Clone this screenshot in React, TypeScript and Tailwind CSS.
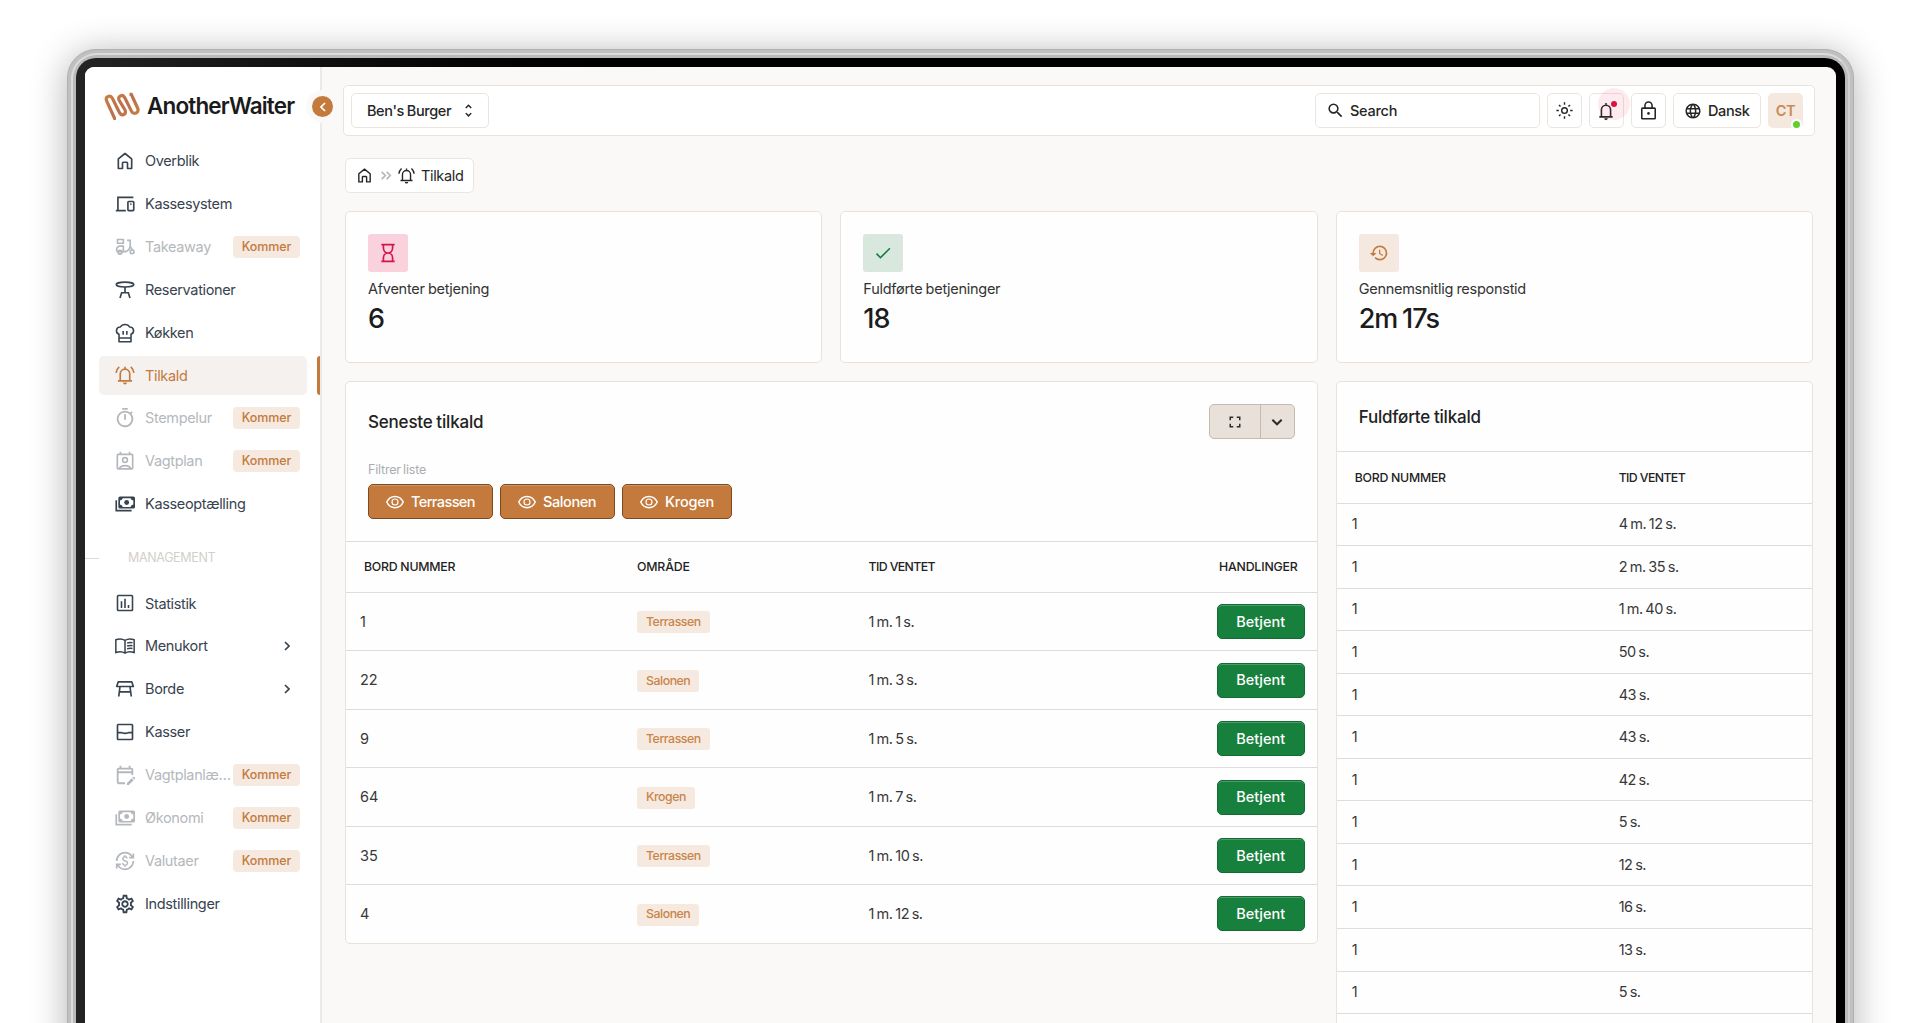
import type { ReactNode } from "react";
import {
  MdCheck,
  MdCurrencyExchange,
  MdHistory,
  MdLanguage,
  MdOutlineEditCalendar,
  MdOutlineSettings,
  MdOutlineTimer,
  MdSearch,
  MdUnfoldMore,
} from "react-icons/md";

type IconProps = { className?: string };

function Stroke({ className, children, width = 1.8 }: { className?: string; children: ReactNode; width?: number }) {
  return (
    <svg viewBox="0 0 24 24" className={className} fill="none" stroke="currentColor" strokeWidth={width}>
      {children}
    </svg>
  );
}

const Home = ({ className }: IconProps) => (
  <Stroke className={className} width={2}>
    <path d="M4 21V9.500L12 3l8 6.500V21h-5v-6.500a1 1 0 0 0-1-1h-4a1 1 0 0 0-1 1V21z" strokeLinejoin="round" />
  </Stroke>
);

const Devices = ({ className }: IconProps) => (
  <Stroke className={className} width={2}>
    <path d="M22 4H3.500V19M1 20h12" />
    <rect x="15.500" y="9" width="7" height="11" rx="1" />
    <path d="M19 11.500v1.500" />
  </Stroke>
);

const BellRing = ({ className }: IconProps) => (
  <Stroke className={className} width={2}>
    <path d="M3.500 19h17M6.300 19v-8.300a5.700 5.700 0 0 1 11.400 0V19M12 5V2.200M1.300 9.500C1.500 6.500 2.800 4.300 5 2.200M22.700 9.500c-.2-3-1.500-5.200-3.700-7.300" />
    <path d="M9.600 21h4.800a2.400 2.400 0 0 1-4.800 0z" fill="currentColor" stroke="none" />
  </Stroke>
);

const Bell = ({ className }: IconProps) => (
  <Stroke className={className} width={1.9}>
    <path d="M4 19h16M6.500 19v-8.500a5.500 5.500 0 0 1 11 0V19M12 5V2.500" />
    <path d="M9.800 20.800h4.400a2.200 2.200 0 0 1-4.400 0z" fill="currentColor" stroke="none" />
  </Stroke>
);

const Moped = ({ className }: IconProps) => (
  <Stroke className={className} width={2}>
    <path d="M3 3h7v4.500H3zM2 17.500V15a4 4 0 0 1 4-4h4v6.500h3.500c2.200-1.200 4.300-3.500 4.800-6V4H14.500" />
    <path d="M2 17.500h8M18 11l2.500 4" />
    <circle cx="6" cy="18.200" r="2.300" />
    <circle cx="20.500" cy="17.800" r="2.300" />
  </Stroke>
);

const TableBar = ({ className }: IconProps) => (
  <Stroke className={className} width={2}>
    <ellipse cx="12" cy="5.500" rx="10.500" ry="2.900" />
    <path d="M12 8.400V15M6 21.500l2-6.200h8l2 6.200" />
  </Stroke>
);

const ChefHat = ({ className }: IconProps) => (
  <Stroke className={className} width={1.9}>
    <path d="M4.800 22.500V13.500C.2 12 .8 4.800 6.500 4.800 8.500.8 15.500.8 17.500 4.800c5.700 0 6.300 7.200 1.700 8.700v9zM4.800 18h14.400M9.800 9.500v4.500M14.200 9.500v4.500" strokeLinejoin="round" />
  </Stroke>
);

const Timer = () => <MdOutlineTimer className="-mx-px size-[22px] shrink-0" />;
const EditCalendar = () => <MdOutlineEditCalendar className="-mx-px size-[22px] shrink-0" />;
const Exchange = () => <MdCurrencyExchange className="size-5 shrink-0" />;
const Settings = () => <MdOutlineSettings className="-mx-px size-[22px] shrink-0" />;

const ContactCalendar = ({ className }: IconProps) => (
  <Stroke className={className} width={2}>
    <rect x="2.800" y="4" width="18.400" height="17.500" rx="1" />
    <path d="M6.500 1V4M17.500 1V4M5 21c3-4.500 11-4.500 14 0" />
    <circle cx="12" cy="10.800" r="2.900" />
  </Stroke>
);

const Payments = ({ className }: IconProps) => (
  <Stroke className={className} width={2}>
    <rect x="5" y="4" width="18" height="12.500" rx="1" />
    <path d="M1.500 7.500V20H20" />
    <circle cx="14" cy="10.200" r="2.900" fill="currentColor" stroke="none" />
    <path d="M5 8V4h4.500A4.500 4.500 0 0 1 5 8zM23 8V4h-4.500A4.500 4.500 0 0 0 23 8zM5 12.500v4h4.500A4.500 4.500 0 0 0 5 12.500zM23 12.500v4h-4.500a4.500 4.500 0 0 1 4.500-4z" fill="currentColor" stroke="none" />
  </Stroke>
);

const BarsBox = ({ className }: IconProps) => (
  <Stroke className={className} width={1.9}>
    <rect x="3" y="3" width="18" height="18" rx="1" />
    <path d="M7.800 10v8M12 7v11M16.200 14.500V18" />
  </Stroke>
);

const MenuBook = ({ className }: IconProps) => (
  <Stroke className={className} width={1.8}>
    <path d="M12 20.500C9 18.500 5 18.300 1 19.800V4.500C5 3 9 3.300 12 5.300c3-2 7-2.300 11-.8v15.300C19 18.300 15 18.500 12 20.500zM12 5.300v15.200" />
    <path d="M14.500 8.500c2-.8 4.500-.9 6.500-.4M14.500 12c2-.8 4.500-.9 6.500-.4M14.500 15.500c2-.8 4.500-.9 6.500-.4" />
  </Stroke>
);

const Table = ({ className }: IconProps) => (
  <Stroke className={className} width={2}>
    <path d="M3.800 3.500h16.400l1.800 5.500H2zM6 9L4.500 21M18 9l1.500 12M5.500 15.500h13" strokeLinejoin="round" />
  </Stroke>
);

const Drawer = ({ className }: IconProps) => (
  <Stroke className={className} width={2}>
    <rect x="3" y="3" width="18" height="18" rx="1" />
    <path d="M3 12.800h4.500c1.500 1 7.500 1 9 0H21" />
  </Stroke>
);

const Hourglass = ({ className }: IconProps) => (
  <Stroke className={className} width={2}>
    <path d="M4 2h16M4 22h16M6.500 2v4c0 3.500 2.500 6 5.500 6s5.500-2.500 5.500-6V2M6.500 22v-4c0-3.500 2.500-6 5.500-6s5.500 2.500 5.500 6v4" />
  </Stroke>
);

const Sun = ({ className }: IconProps) => (
  <Stroke className={className} width={2}>
    <circle cx="12" cy="12" r="4" />
    <path d="M12 .5v3.500M12 20v3.500M.5 12H4M20 12h3.500M4.200 4.200l2.200 2.200M17.600 17.600l2.200 2.200M4.200 19.800l2.200-2.200M17.600 6.400l2.200-2.200" />
  </Stroke>
);

const Lock = ({ className }: IconProps) => (
  <Stroke className={className} width={2}>
    <rect x="3.500" y="9" width="17" height="13.500" rx="1" />
    <path d="M7.500 9V5.800a4.500 4.500 0 0 1 9 0V9" />
    <circle cx="12" cy="15.700" r="1.700" fill="currentColor" stroke="none" />
  </Stroke>
);

const Eye = ({ className }: IconProps) => (
  <Stroke className={className} width={2}>
    <path d="M1 12C5.500 2 18.500 2 23 12 18.500 22 5.500 22 1 12z" />
    <circle cx="12" cy="12" r="4" strokeWidth="1.600" />
  </Stroke>
);

const Expand = ({ className }: IconProps) => (
  <Stroke className={className} width={3}>
    <path d="M2.500 8.500V2.500h6M15.500 2.500h6v6M21.500 15.500v6h-6M8.500 21.500h-6v-6" />
  </Stroke>
);

const Chevron = ({ className }: IconProps) => (
  <Stroke className={className} width={3.500}>
    <path d="M8 4l8 8-8 8" />
  </Stroke>
);

const Logo = () => (
  <svg viewBox="0 0 36 28" className="h-7 w-9 shrink-0" fill="none">
    <defs>
      <linearGradient id="mark" x1="0" y1="0" x2="1" y2="1">
        <stop offset="0" stopColor="#c9803f" />
        <stop offset="0.5" stopColor="#bd6f4e" />
        <stop offset="1" stopColor="#c9803f" />
      </linearGradient>
    </defs>
    <path
      d="M12 26.300 H10.600 L2.600 9 C1 4.300 6.300 2.300 8.500 6.500 L15.400 20.500 C17.600 24.800 22.800 22.500 21 18 L15.300 8.500 C13.200 4 18.500 1.500 20.800 5.800 L27.300 18.800 C29.300 23.500 35.800 21 33.600 16 L27.300 2.300 H25.500"
      stroke="url(#mark)"
      strokeWidth="3.200"
    />
  </svg>
);

type NavItem = {
  label: string;
  icon: (p: IconProps) => ReactNode;
  soon?: boolean;
  active?: boolean;
  more?: boolean;
};

const mainNav: NavItem[] = [
  { label: "Overblik", icon: Home },
  { label: "Kassesystem", icon: Devices },
  { label: "Takeaway", icon: Moped, soon: true },
  { label: "Reservationer", icon: TableBar },
  { label: "Køkken", icon: ChefHat },
  { label: "Tilkald", icon: BellRing, active: true },
  { label: "Stempelur", icon: Timer, soon: true },
  { label: "Vagtplan", icon: ContactCalendar, soon: true },
  { label: "Kasseoptælling", icon: Payments },
];

const managementNav: NavItem[] = [
  { label: "Statistik", icon: BarsBox },
  { label: "Menukort", icon: MenuBook, more: true },
  { label: "Borde", icon: Table, more: true },
  { label: "Kasser", icon: Drawer },
  { label: "Vagtplanlæ…", icon: EditCalendar, soon: true },
  { label: "Økonomi", icon: Payments, soon: true },
  { label: "Valutaer", icon: Exchange, soon: true },
  { label: "Indstillinger", icon: Settings },
];

function NavRow({ item }: { item: NavItem }) {
  const Icon = item.icon;
  const tone = item.active ? "text-[#c47a3c]" : item.soon ? "text-[#b4b8bc]" : "text-[#37434f]";
  return (
    <li className="relative flex h-[42.900px] items-center pl-[14px] pr-[13px]">
      <div className={`flex h-[39px] w-full items-center rounded-[5px] pl-4 pr-[7px] ${tone} ${item.active ? "bg-[#f5f1ef]" : ""}`}>
        <Icon className="size-5 shrink-0" />
        <span className="ml-[10px] flex-1 whitespace-nowrap text-[14.500px] tracking-[-0.350px]">{item.label}</span>
        {item.soon && (
          <span className="flex h-[22px] w-[67px] shrink-0 items-center justify-center rounded bg-[#f5e9e0] pt-px text-[12.500px] font-medium tracking-[-0.100px] text-[#c47a3c]">
            Kommer
          </span>
        )}
        {item.more && <Chevron className="mr-[7px] size-3" />}
      </div>
      {item.active && <span className="absolute right-0 h-[39px] w-[3px] rounded-l-[3px] bg-[#c47a3c]" />}
    </li>
  );
}

function Sidebar() {
  return (
    <aside className="relative flex w-[237px] shrink-0 flex-col border-r-2 border-[#ece9e6] bg-white">
      <div className="flex h-[72.500px] items-center pl-[19px] pt-[6px]">
        <Logo />
        <span className="ml-[7px] text-[22.500px] font-semibold tracking-[-0.850px] text-[#1b1b1b]">AnotherWaiter</span>
      </div>
      <ul>
        {mainNav.map((item) => (
          <NavRow key={item.label} item={item} />
        ))}
      </ul>
      <div className="flex h-[56.500px] items-center pt-[9px]">
        <span className="h-px w-[14px] bg-[#dedbd6]" />
        <span className="ml-[29px] text-[12.500px] tracking-[-0.350px] text-[#d3d0c8]">MANAGEMENT</span>
      </div>
      <ul>
        {managementNav.map((item) => (
          <NavRow key={item.label} item={item} />
        ))}
      </ul>
      <button className="absolute -right-[19px] top-[23px] flex size-[33px] items-center justify-center rounded-full bg-[#faf9f7]">
        <span className="flex size-[21px] items-center justify-center rounded-full bg-[#c47a3c] text-white">
          <Chevron className="size-3 rotate-180" />
        </span>
      </button>
    </aside>
  );
}

const box = "flex h-[35px] items-center rounded-[5px] border border-[#ebe5df] bg-white text-[#262626]";

function Header() {
  return (
    <header className="flex h-[51px] items-center rounded-[5px] border border-[#e8e3dc] bg-white pl-[7px] pr-[11px]">
      <div className={`${box} w-[138px] pl-[15px] text-[14.500px] font-medium tracking-[-0.400px] [word-spacing:-0.600px]`}>
        Ben's Burger
        <MdUnfoldMore className="ml-auto mr-[11px] size-[17px]" />
      </div>
      <div className="ml-auto flex gap-[7px]">
        <div className={`${box} w-[225px] pl-[10px] text-[14.500px] font-medium tracking-[-0.250px]`}>
          <MdSearch className="mr-[5px] size-[19px]" />
          Search
        </div>
        <div className={`${box} w-[35px] justify-center`}>
          <Sun className="size-[17px]" />
        </div>
        <div className={`${box} relative w-[35px] justify-center`}>
          <Bell className="-ml-px size-[20px]" />
          <span className="absolute right-[-7px] top-[-6px] size-8 rounded-full bg-[#f43f5e]/10" />
          <span className="absolute right-[6px] top-[7px] size-[6px] rounded-full bg-[#dc1040]" />
        </div>
        <div className={`${box} w-[35px] justify-center`}>
          <Lock className="size-[19px]" />
        </div>
        <div className={`${box} w-[88px] pl-[10px] text-[14.500px] font-medium tracking-[-0.400px]`}>
          <MdLanguage className="mr-[6px] size-[18px]" />
          Dansk
        </div>
        <div className="relative flex size-[35px] items-center justify-center rounded-[5px] bg-[#f5e8df] text-[14.500px] font-semibold tracking-[-0.300px] text-[#c98a52]">
          CT
          <span className="absolute -bottom-[2px] right-px size-[11px] rounded-full border-2 border-white bg-[#63cf2b]" />
        </div>
      </div>
    </header>
  );
}

function Stat({ icon, tone, label, value }: { icon: ReactNode; tone: string; label: string; value: string }) {
  return (
    <div className="h-[152px] rounded-[5px] border border-[#e9e2da] bg-[#fefefe] pl-[22px] pt-[22px]">
      <div className={`flex h-[38px] w-10 items-center justify-center rounded-[3px] ${tone}`}>{icon}</div>
      <div className="mt-[6px] text-[14.500px] leading-[21px] tracking-[-0.270px] text-[#333] [word-spacing:-0.500px]">{label}</div>
      <div className="mt-[2px] text-[27px] font-medium leading-[36px] tracking-[-1px] text-[#1c1c1c] [word-spacing:-1.500px]">{value}</div>
    </div>
  );
}

const calls = [
  ["1", "Terrassen", "1 m. 1 s."],
  ["22", "Salonen", "1 m. 3 s."],
  ["9", "Terrassen", "1 m. 5 s."],
  ["64", "Krogen", "1 m. 7 s."],
  ["35", "Terrassen", "1 m. 10 s."],
  ["4", "Salonen", "1 m. 12 s."],
];

const filters = [
  { label: "Terrassen", size: "w-[125px]", tracking: "tracking-[-0.600px]" },
  { label: "Salonen", size: "w-[115px]", tracking: "tracking-[-0.400px]" },
  { label: "Krogen", size: "w-[110px]", tracking: "tracking-[-0.200px]" },
];

const callGrid = "grid grid-cols-[291px_231.500px_1fr_auto] items-center border-t border-[#dedddb]";
const headText = "pt-px text-[12.300px] font-medium text-[#222]";

function LatestCalls() {
  return (
    <section className="col-span-2 self-start rounded-[5px] border border-[#e9e2da] bg-[#fefefe]">
      <div className="flex items-center justify-between pl-[22px] pr-[22px] pt-[22px]">
        <h2 className="pt-[2px] text-[17px] font-medium tracking-[-0.200px] text-[#222] [word-spacing:-0.500px]">Seneste tilkald</h2>
        <div className="flex h-[35px] w-[86px] rounded-[5px] border border-[#c3bbb1] bg-[#e9e1d9] text-[#2c2c2c]">
          <span className="flex w-[51px] items-center justify-center border-r border-[#c3bbb1]">
            <Expand className="size-3" />
          </span>
          <span className="flex flex-1 items-center justify-center">
            <Chevron className="size-[14px] rotate-90" />
          </span>
        </div>
      </div>
      <div className="px-[22px] pb-[22px] pt-[22px]">
        <div className="text-[12.500px] leading-[18px] tracking-[-0.200px] text-[#a9adb2] [word-spacing:-1px]">Filtrer liste</div>
        <div className="mt-[5px] flex gap-[7px]">
          {filters.map((f) => (
            <button
              key={f.label}
              className={`flex h-[35px] items-center rounded-[5px] border border-[#7d4a20] bg-[#c47a3c] pl-[17px] text-[14.500px] font-medium text-white shadow-[inset_0_1px_0_#cf9464] ${f.size} ${f.tracking}`}
            >
              <Eye className="mr-[7px] size-[18px]" />
              {f.label}
            </button>
          ))}
        </div>
      </div>
      <div className={`${callGrid} ${headText} h-[51px]`}>
        <span className="pl-[18px] tracking-[-0.250px]">BORD NUMMER</span>
        <span className="tracking-[-0.150px]">OMRÅDE</span>
        <span className="tracking-[-0.600px]">TID VENTET</span>
        <span className="pr-[19px] tracking-[-0.150px]">HANDLINGER</span>
      </div>
      {calls.map(([table, area, wait]) => (
        <div key={table} className={`${callGrid} h-[58.450px] text-[14.500px] text-[#383838]`}>
          <span className="pl-[14px]">{table}</span>
          <span>
            <span className="inline-flex h-[22px] items-center rounded-[3px] bg-[#f5e9e0] px-[9px] text-[12.300px] font-medium tracking-[-0.450px] text-[#c98549]">
              {area}
            </span>
          </span>
          <span className="tracking-[-0.450px] [word-spacing:-1px]">{wait}</span>
          <button className="mr-[12px] flex h-[35px] w-[88px] items-center justify-center rounded-[5px] border border-[#136c34] bg-[#17803d] text-[14.500px] font-medium text-white shadow-[inset_0_1px_0_#4f9a69]">
            Betjent
          </button>
        </div>
      ))}
    </section>
  );
}

const done = ["4 m. 12 s.", "2 m. 35 s.", "1 m. 40 s.", "50 s.", "43 s.", "43 s.", "42 s.", "5 s.", "12 s.", "16 s.", "13 s.", "5 s."];

const doneGrid = "grid grid-cols-[282px_1fr] items-center border-t border-[#dedddb]";

function CompletedCalls() {
  return (
    <section className="rounded-[5px] border border-[#e9e2da] bg-[#fefefe]">
      <h2 className="flex h-[69px] items-center pl-[22px] pt-[2px] text-[17px] font-medium tracking-[-0.200px] text-[#222] [word-spacing:-0.500px]">
        Fuldførte tilkald
      </h2>
      <div className={`${doneGrid} ${headText} h-[51.500px]`}>
        <span className="pl-[18px] tracking-[-0.250px]">BORD NUMMER</span>
        <span className="tracking-[-0.600px]">TID VENTET</span>
      </div>
      {done.map((wait, i) => (
        <div key={i} className={`${doneGrid} h-[42.550px] text-[14.500px] text-[#383838]`}>
          <span className="pl-[15px]">1</span>
          <span className="tracking-[-0.450px] [word-spacing:-1px]">{wait}</span>
        </div>
      ))}
      <div className="h-10 border-t border-[#dedddb]" />
    </section>
  );
}

export default function App() {
  return (
    <div className="h-[1023px] overflow-hidden bg-white pl-[67px] pt-[49px] font-[Inter,'Liberation_Sans',sans-serif]">
      <div className="h-[1100px] w-[1787px] rounded-[29px] border border-[#b0b0b0] bg-[#c0c0c0] p-[3px] shadow-[0_4px_36px_rgba(0,0,0,0.3)]">
        <div className="h-full rounded-[26px] border-2 border-[#dcdcdc] border-r-[#d0d0d0] bg-[#bababa] p-[3px]">
          <div className="h-full rounded-[20px] bg-linear-to-r from-[#242424] to-black to-40% p-[9px]">
            <div className="flex h-full overflow-hidden rounded-[9px] bg-[#faf9f7]">
              <Sidebar />
              <main className="flex-1 pl-[21px] pr-[21px] pt-[18px]">
                <Header />
                <div className="ml-[2px] mr-[2px]">
                  <nav className={`${box} mt-[22px] w-[129px] pl-[10px] text-[14.500px] tracking-[-0.350px]`}>
                    <Home className="size-[17px]" />
                    <span className="ml-[5px] flex text-[#b5b5b5]">
                      <Chevron className="size-[11px]" />
                      <Chevron className="-ml-[6px] size-[11px]" />
                    </span>
                    <BellRing className="ml-[4px] size-[17px]" />
                    <span className="ml-[6px]">Tilkald</span>
                  </nav>
                  <div className="mt-[18px] grid grid-cols-3 gap-[18px]">
                    <Stat icon={<Hourglass className="size-[20px] text-[#d4144b]" />} tone="bg-[#fad2de]" label="Afventer betjening" value="6" />
                    <Stat icon={<MdCheck className="size-5 text-[#17803d]" />} tone="bg-[#d8e8de]" label="Fuldførte betjeninger" value="18" />
                    <Stat icon={<MdHistory className="size-5 text-[#c47a3c]" />} tone="bg-[#f5e8df]" label="Gennemsnitlig responstid" value="2m 17s" />
                    <LatestCalls />
                    <CompletedCalls />
                  </div>
                </div>
              </main>
            </div>
          </div>
        </div>
      </div>
    </div>
  );
}
